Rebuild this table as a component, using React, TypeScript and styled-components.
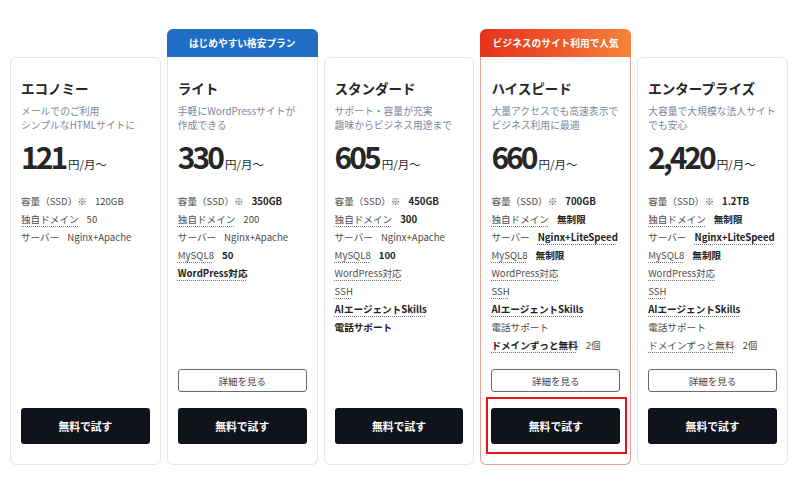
import React from "react";
import styled, { createGlobalStyle, css } from "styled-components";

const Global = createGlobalStyle`
  html, body { margin: 0; padding: 0; background: #ffffff; }
  body {
    font-family: "Noto Sans CJK JP", "Noto Sans", sans-serif;
    color: #222;
  }
`;

const Page = styled.div`
  width: 800px;
  height: 483px;
  box-sizing: border-box;
  padding: 29px 12px 18px 10px;
`;

const Grid = styled.div`
  display: grid;
  grid-template-columns: repeat(5, 1fr);
  column-gap: 6px;
  height: 100%;
`;

const Column = styled.div`
  display: flex;
  flex-direction: column;
  min-width: 0;
`;

type Tone = "blue" | "red" | "none";

const Badge = styled.div<{ $tone: Tone }>`
  height: 28px;
  flex: none;
  display: flex;
  align-items: center;
  justify-content: center;
  font-size: 9.7px;
  font-weight: 700;
  color: #fff;
  border-radius: 6px 6px 0 0;
  ${(p) =>
    p.$tone === "blue" &&
    css`
      background: #1f6dc4;
    `}
  ${(p) =>
    p.$tone === "red" &&
    css`
      background: linear-gradient(90deg, #e5321c 0%, #ee5a2c 55%, #f5843a 100%);
    `}
  ${(p) =>
    p.$tone === "none" &&
    css`
      visibility: hidden;
    `}
`;

const Card = styled.div<{ $tone: Tone }>`
  flex: 1;
  display: flex;
  flex-direction: column;
  box-sizing: border-box;
  padding: 18px 10px 20px;
  background: #fff;
  border: 1px solid ${(p) => (p.$tone === "red" ? "#e8a293" : "#e6e6e8")};
  border-radius: ${(p) => (p.$tone === "none" ? "6px" : "0 0 6px 6px")};
  ${(p) =>
    p.$tone !== "none" &&
    css`
      border-top: none;
      padding-top: 19px;
    `}
`;

const Title = styled.h2`
  margin: 0;
  font-size: 13.5px;
  line-height: 24px;
  font-weight: 700;
  color: #262626;
`;

const Desc = styled.p`
  margin: 4px 0 0;
  font-size: 9.8px;
  line-height: 14px;
  height: 28px;
  color: #7d86a0;
`;

const Price = styled.div`
  margin-top: 6px;
  line-height: 36px;
  color: #262626;
  white-space: nowrap;
`;

const Amount = styled.span`
  font-size: 30px;
  font-weight: 700;
  letter-spacing: -3px;
`;

const Unit = styled.span`
  font-size: 11.5px;
  margin-left: 3px;
`;

const Features = styled.ul`
  list-style: none;
  margin: 10px 0 0;
  padding: 0;
`;

const Feature = styled.li`
  font-size: 9.6px;
  line-height: 18px;
  color: #4d4d4d;
  white-space: nowrap;
`;

const dottedLine = css`
  text-decoration: underline dotted #777;
  text-underline-offset: 3px;
`;

const Label = styled.span<{ $dotted?: boolean; $bold?: boolean }>`
  color: ${(p) => (p.$bold ? "#222" : "#4d4d4d")};
  font-weight: ${(p) => (p.$bold ? 700 : 400)};
  ${(p) => p.$dotted && dottedLine}
`;

const Value = styled.span<{ $bold?: boolean; $dotted?: boolean }>`
  margin-left: 8px;
  color: ${(p) => (p.$bold ? "#222" : "#4d4d4d")};
  font-weight: ${(p) => (p.$bold ? 700 : 400)};
  ${(p) => p.$dotted && dottedLine}
`;

const Actions = styled.div`
  margin-top: auto;
  display: flex;
  flex-direction: column;
`;

const DetailButton = styled.button`
  height: 23px;
  box-sizing: border-box;
  border: 1px solid #6b6b6b;
  border-radius: 3px;
  background: #fff;
  font-family: inherit;
  font-size: 9.5px;
  color: #444;
  margin-bottom: 16px;
  padding: 0;
  cursor: pointer;
`;

const TryWrap = styled.div`
  position: relative;
`;

const TryButton = styled.button`
  width: 100%;
  height: 36px;
  border: none;
  border-radius: 3px;
  background: #11131a;
  color: #fff;
  font-family: inherit;
  font-size: 10.8px;
  font-weight: 700;
  padding: 0;
  cursor: pointer;
`;

const Highlight = styled.div`
  position: absolute;
  top: -11px;
  bottom: -10px;
  left: -5px;
  right: -7px;
  border: 2.5px solid #e8141c;
  pointer-events: none;
`;

type Feat = {
  label: string;
  value?: string;
  dotted?: boolean;
  labelBold?: boolean;
  valueBold?: boolean;
  valueDotted?: boolean;
};

type Plan = {
  name: string;
  desc: [string, string];
  price: string;
  badge?: { text: string; tone: Tone };
  features: Feat[];
  detail: boolean;
  highlight?: boolean;
};

const plans: Plan[] = [
  {
    name: "エコノミー",
    desc: ["メールでのご利用", "シンプルなHTMLサイトに"],
    price: "121",
    detail: false,
    features: [
      { label: "容量（SSD）※", value: "120GB" },
      { label: "独自ドメイン", value: "50", dotted: true },
      { label: "サーバー", value: "Nginx+Apache" },
    ],
  },
  {
    name: "ライト",
    desc: ["手軽にWordPressサイトが", "作成できる"],
    price: "330",
    badge: { text: "はじめやすい格安プラン", tone: "blue" },
    detail: true,
    features: [
      { label: "容量（SSD）※", value: "350GB", valueBold: true },
      { label: "独自ドメイン", value: "200", dotted: true },
      { label: "サーバー", value: "Nginx+Apache" },
      { label: "MySQL8", value: "50", dotted: true, valueBold: true },
      { label: "WordPress対応", dotted: true, labelBold: true },
    ],
  },
  {
    name: "スタンダード",
    desc: ["サポート・容量が充実", "趣味からビジネス用途まで"],
    price: "605",
    detail: false,
    features: [
      { label: "容量（SSD）※", value: "450GB", valueBold: true },
      { label: "独自ドメイン", value: "300", dotted: true, valueBold: true },
      { label: "サーバー", value: "Nginx+Apache" },
      { label: "MySQL8", value: "100", dotted: true, valueBold: true },
      { label: "WordPress対応", dotted: true },
      { label: "SSH", dotted: true },
      { label: "AIエージェントSkills", dotted: true, labelBold: true },
      { label: "電話サポート", labelBold: true },
    ],
  },
  {
    name: "ハイスピード",
    desc: ["大量アクセスでも高速表示で", "ビジネス利用に最適"],
    price: "660",
    badge: { text: "ビジネスのサイト利用で人気", tone: "red" },
    detail: true,
    highlight: true,
    features: [
      { label: "容量（SSD）※", value: "700GB", valueBold: true },
      { label: "独自ドメイン", value: "無制限", dotted: true, valueBold: true },
      { label: "サーバー", value: "Nginx+LiteSpeed", valueBold: true, valueDotted: true },
      { label: "MySQL8", value: "無制限", dotted: true, valueBold: true },
      { label: "WordPress対応", dotted: true },
      { label: "SSH", dotted: true },
      { label: "AIエージェントSkills", dotted: true, labelBold: true },
      { label: "電話サポート" },
      { label: "ドメインずっと無料", value: "2個", dotted: true, labelBold: true },
    ],
  },
  {
    name: "エンタープライズ",
    desc: ["大容量で大規模な法人サイト", "でも安心"],
    price: "2,420",
    detail: true,
    features: [
      { label: "容量（SSD）※", value: "1.2TB", valueBold: true },
      { label: "独自ドメイン", value: "無制限", dotted: true, valueBold: true },
      { label: "サーバー", value: "Nginx+LiteSpeed", valueBold: true, valueDotted: true },
      { label: "MySQL8", value: "無制限", dotted: true, valueBold: true },
      { label: "WordPress対応", dotted: true },
      { label: "SSH", dotted: true },
      { label: "AIエージェントSkills", dotted: true, labelBold: true },
      { label: "電話サポート" },
      { label: "ドメインずっと無料", value: "2個", dotted: true },
    ],
  },
];

export default function App() {
  return (
    <>
      <Global />
      <Page>
        <Grid>
          {plans.map((p) => {
            const tone: Tone = p.badge ? p.badge.tone : "none";
            return (
              <Column key={p.name}>
                <Badge $tone={tone}>{p.badge ? p.badge.text : "\u00a0"}</Badge>
                <Card $tone={tone}>
                  <Title>{p.name}</Title>
                  <Desc>
                    {p.desc[0]}
                    <br />
                    {p.desc[1]}
                  </Desc>
                  <Price>
                    <Amount>{p.price}</Amount>
                    <Unit>円/月〜</Unit>
                  </Price>
                  <Features>
                    {p.features.map((f) => (
                      <Feature key={f.label}>
                        <Label $dotted={f.dotted} $bold={f.labelBold}>
                          {f.label}
                        </Label>
                        {f.value && (
                          <Value $bold={f.valueBold} $dotted={f.valueDotted}>
                            {f.value}
                          </Value>
                        )}
                      </Feature>
                    ))}
                  </Features>
                  <Actions>
                    {p.detail && <DetailButton>詳細を見る</DetailButton>}
                    <TryWrap>
                      <TryButton>無料で試す</TryButton>
                      {p.highlight && <Highlight />}
                    </TryWrap>
                  </Actions>
                </Card>
              </Column>
            );
          })}
        </Grid>
      </Page>
    </>
  );
}
